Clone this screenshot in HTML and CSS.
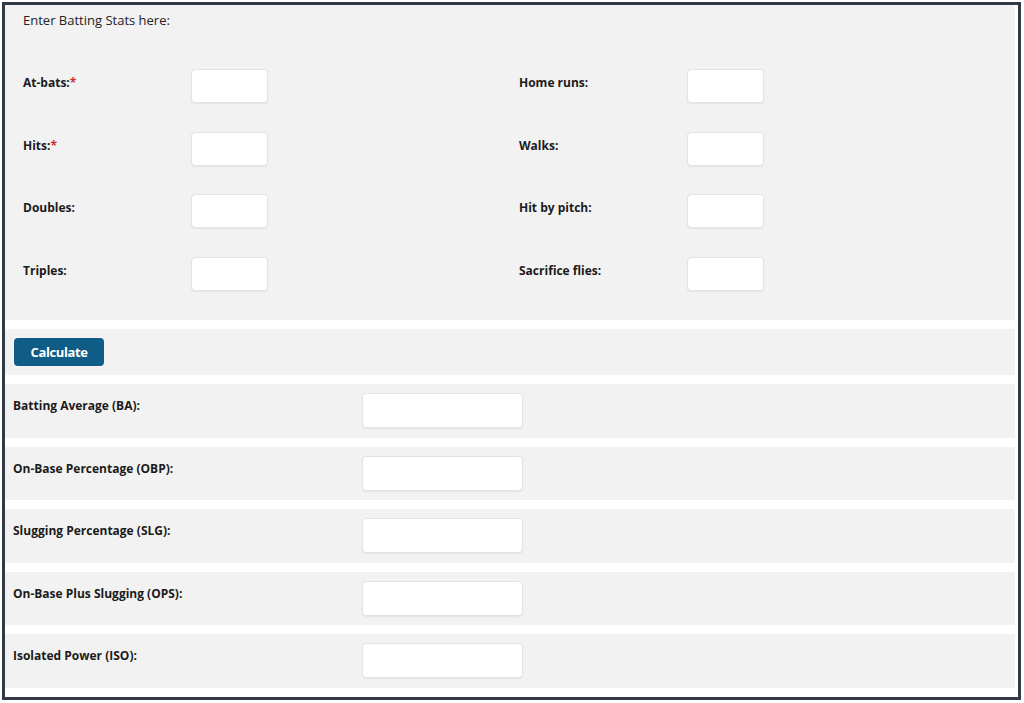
FILE: index.html
```html
<!DOCTYPE html>
<html>
<head>
<meta charset="utf-8">
<link rel="stylesheet" href="styles.css">
</head>
<body>
<div class="frame">
  <section class="panel stats">
    <p class="intro">Enter Batting Stats here:</p>
    <div class="grid">
      <div class="field"><label>At-bats:<span class="req">*</span></label><input class="box" type="text"></div>
      <div class="field"><label>Home runs:</label><input class="box" type="text"></div>
      <div class="field"><label>Hits:<span class="req">*</span></label><input class="box" type="text"></div>
      <div class="field"><label>Walks:</label><input class="box" type="text"></div>
      <div class="field"><label>Doubles:</label><input class="box" type="text"></div>
      <div class="field"><label>Hit by pitch:</label><input class="box" type="text"></div>
      <div class="field"><label>Triples:</label><input class="box" type="text"></div>
      <div class="field"><label>Sacrifice flies:</label><input class="box" type="text"></div>
    </div>
  </section>
  <section class="panel action">
    <button class="btn" type="button">Calculate</button>
  </section>
  <section class="panel result"><label>Batting Average (BA):</label><input class="out" type="text"></section>
  <section class="panel result"><label>On-Base Percentage (OBP):</label><input class="out" type="text"></section>
  <section class="panel result"><label>Slugging Percentage (SLG):</label><input class="out" type="text"></section>
  <section class="panel result"><label>On-Base Plus Slugging (OPS):</label><input class="out" type="text"></section>
  <section class="panel result"><label>Isolated Power (ISO):</label><input class="out" type="text"></section>
</div>
</body>
</html>
```
FILE: styles.css
```css
html, body {
  margin: 0;
  padding: 0;
  background: #ffffff;
}
body {
  font-family: "Open Sans", "DejaVu Sans", sans-serif;
  color: #1b1b1b;
  padding: 2px 3px 3px 2px;
}
.frame {
  border: 3px solid #333a47;
  height: 698px;
  box-sizing: border-box;
  padding: 0 3px 0 0;
  display: flex;
  flex-direction: column;
  gap: 9px;
}
.panel {
  background: #f2f2f2;
  flex-shrink: 0;
}
.stats {
  height: 315px;
  box-sizing: border-box;
  padding: 7px 18px 0 18px;
}
.intro {
  margin: 0;
  font-size: 13px;
  line-height: 17px;
  color: #222;
}
.grid {
  margin-top: 40px;
  display: grid;
  grid-template-columns: 496px 496px;
  row-gap: 28.5px;
}
.field {
  display: flex;
  align-items: flex-start;
}
.field label {
  width: 168px;
  padding-top: 6px;
  font-size: 12px;
  line-height: 16px;
  font-weight: 700;
}
.req {
  color: #d0312d;
}
.box, .out {
  box-sizing: border-box;
  margin: 0;
  background: #ffffff;
  border: 1px solid #e3e3e3;
  border-radius: 4px;
  box-shadow: 0 1px 2px rgba(0, 0, 0, 0.06);
  outline: none;
}
.box {
  width: 77px;
  height: 34px;
}
.action {
  height: 46px;
  box-sizing: border-box;
  padding: 9px 9px;
}
.btn {
  height: 28px;
  width: 90px;
  border: none;
  border-radius: 4px;
  background: #0f5c86;
  color: #ffffff;
  font-family: "Open Sans", "DejaVu Sans", sans-serif;
  font-weight: 700;
  font-size: 13px;
  letter-spacing: -0.4px;
  padding: 0;
}
.result {
  height: 53.5px;
  box-sizing: border-box;
  padding: 9px 8px;
  display: flex;
  align-items: flex-start;
}
.result label {
  width: 349px;
  padding-top: 5px;
  font-size: 12px;
  line-height: 16px;
  font-weight: 700;
}
.out {
  width: 161px;
  height: 35px;
}
```
